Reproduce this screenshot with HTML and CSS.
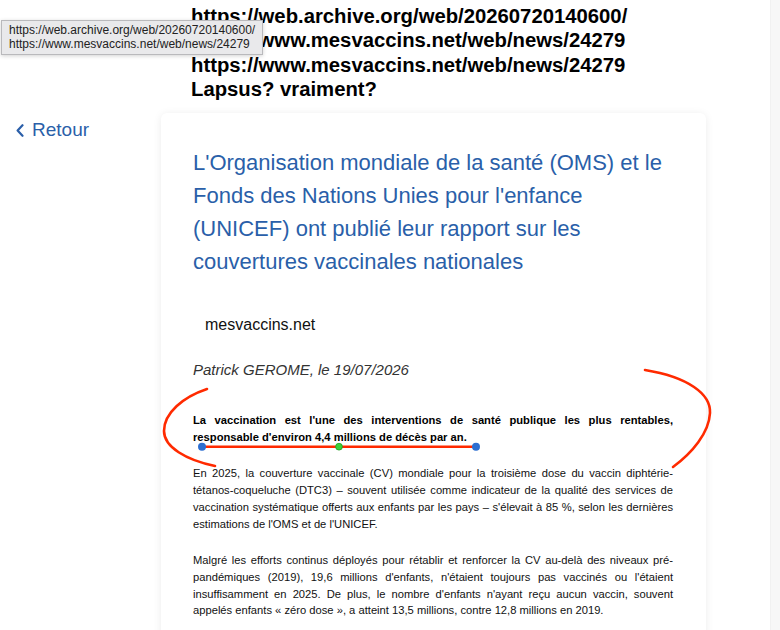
FILE: index.html
```html
<!DOCTYPE html>
<html lang="fr">
<head>
<meta charset="utf-8">
<title>mesvaccins.net</title>
<link rel="stylesheet" href="styles.css">
</head>
<body>
<div class="page">
  <div class="main">
    <header class="head">
      <div>https://web.archive.org/web/20260720140600/</div>
      <div>https://www.mesvaccins.net/web/news/24279</div>
      <div>https://www.mesvaccins.net/web/news/24279</div>
      <div>Lapsus? vraiment?</div>
    </header>
    <div class="row">
      <aside class="side">
        <a class="back" href="#">
          <svg class="chev" width="8" height="13" viewBox="0 0 8 13"><path d="M6.5 1.2 L1.6 6.5 L6.5 11.8" fill="none" stroke="currentColor" stroke-width="2.2" stroke-linecap="round" stroke-linejoin="round"/></svg>
          <span>Retour</span>
        </a>
      </aside>
      <article class="card">
        <h1 class="title">L'Organisation mondiale de la santé (OMS) et le Fonds des Nations Unies pour l'enfance (UNICEF) ont publié leur rapport sur les couvertures vaccinales nationales</h1>
        <div class="source">mesvaccins.net</div>
        <div class="byline">Patrick GEROME, le 19/07/2026</div>
        <p class="txt lead">La vaccination est l'une des interventions de santé publique les plus rentables, responsable d'environ 4,4 millions de décès par an.</p>
        <p class="txt">En 2025, la couverture vaccinale (CV) mondiale pour la troisième dose du vaccin diphtérie-tétanos-coqueluche (DTC3) – souvent utilisée comme indicateur de la qualité des services de vaccination systématique offerts aux enfants par les pays – s'élevait à 85&nbsp;%, selon les dernières estimations de l'OMS et de l'UNICEF.</p>
        <p class="txt">Malgré les efforts continus déployés pour rétablir et renforcer la CV au-delà des niveaux pré-pandémiques (2019), 19,6 millions d'enfants, n'étaient toujours pas vaccinés ou l'étaient insuffisamment en 2025. De plus, le nombre d'enfants n'ayant reçu aucun vaccin, souvent appelés enfants «&nbsp;zéro dose&nbsp;», a atteint 13,5 millions, contre 12,8 millions en 2019.</p>
      </article>
    </div>
  </div>
  <div class="strip"></div>
</div>

<div class="tooltip">https://web.archive.org/web/20260720140600/<br>https://www.mesvaccins.net/web/news/24279</div>

<svg class="marks" width="780" height="630" viewBox="0 0 780 630">
  <path d="M207 389 C183 397 164 413 164 431 C164 447 186 460 215 466" fill="none" stroke="#ff2a00" stroke-width="2.6" stroke-linecap="round"/>
  <path d="M645 370 C688 377 711 394 710 413 C709 433 692 453 673 467" fill="none" stroke="#ff2a00" stroke-width="2.6" stroke-linecap="round"/>
  <line x1="202" y1="446.7" x2="476" y2="446.7" stroke="#ff2a00" stroke-width="2.6"/>
  <circle cx="202" cy="446.7" r="4" fill="#2c6fd1"/>
  <circle cx="476" cy="446.7" r="4" fill="#2c6fd1"/>
  <circle cx="339" cy="446.7" r="3.4" fill="#3bd13b" stroke="#1f9e1f" stroke-width="0.8"/>
</svg>
</body>
</html>
```
FILE: styles.css
```css
html, body {
  margin: 0;
  padding: 0;
  background: #ffffff;
}
body {
  font-family: "Liberation Sans", Arial, Helvetica, sans-serif;
  color: #000;
  width: 780px;
  height: 630px;
  overflow: hidden;
  position: relative;
}
.page {
  display: grid;
  grid-template-columns: 770px 10px;
  height: 630px;
}
.main {
  overflow: hidden;
}
.strip {
  background: #f7f7f7;
  border-left: 1px solid #f1f1f1;
}
.head {
  padding: 4px 0 0 191px;
  font-size: 20.3px;
  font-weight: bold;
  line-height: 24.4px;
  color: #000;
}
.row {
  display: flex;
  margin-top: 11.4px;
}
.side {
  width: 161px;
  flex: none;
}
.back {
  display: flex;
  align-items: center;
  gap: 8px;
  padding: 6px 0 0 16px;
  color: #2b5fa9;
  text-decoration: none;
  font-size: 19px;
}
.chev {
  flex: none;
}
.card {
  width: 480px;
  flex: none;
  padding: 33px 33px 40px 32px;
  background: #fff;
  border-radius: 6px;
  box-shadow: 0 1px 9px rgba(0, 0, 0, 0.08);
  min-height: 600px;
}
.title {
  margin: 0;
  font-size: 22px;
  font-weight: normal;
  line-height: 33px;
  color: #2a5fa9;
}
.source {
  margin-top: 38px;
  padding-left: 12px;
  font-size: 16px;
  color: #111;
}
.byline {
  margin-top: 27px;
  font-size: 15px;
  font-style: italic;
  color: #333;
}
.txt {
  margin: 20px 0 0;
  font-size: 11.2px;
  line-height: 16.7px;
  text-align: justify;
  color: #111;
}
.lead {
  margin-top: 34px;
  font-weight: bold;
  color: #000;
}
.tooltip {
  position: absolute;
  left: 1px;
  top: 20px;
  width: 246px;
  padding: 2px 7px 3px 7px;
  background: #e9e9eb;
  border: 1px solid #b9b9bc;
  box-shadow: 0 1px 4px rgba(0, 0, 0, 0.18);
  font-size: 12px;
  line-height: 14px;
  color: #222;
  white-space: nowrap;
}
.marks {
  position: absolute;
  left: 0;
  top: 0;
  pointer-events: none;
}
```
